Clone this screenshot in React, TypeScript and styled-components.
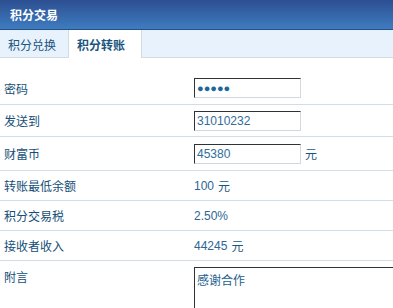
import styled, { createGlobalStyle } from "styled-components";

const GlobalStyle = createGlobalStyle`
  body {
    margin: 0;
    background: #ffffff;
    font-family: "Liberation Sans", "Noto Sans CJK SC", sans-serif;
    font-size: 12px;
  }
`;

const Panel = styled.div`
  width: 393px;
  height: 308px;
  overflow: hidden;
  background: #ffffff;
`;

const Header = styled.div`
  height: 29px;
  border-bottom: 1px solid #24508a;
  background: linear-gradient(#2c4f91, #3f7cc1);
  display: flex;
  align-items: center;
  padding-left: 10px;
  color: #ffffff;
  font-weight: bold;
  font-family: "Noto Sans CJK SC", sans-serif;
  font-size: 12px;
`;

const TabBar = styled.div`
  height: 27px;
  background: #e8f2fc;
  border-bottom: 1px solid #d2dbe2;
  display: flex;
  align-items: stretch;
`;

const Tab = styled.div<{ $active?: boolean }>`
  box-sizing: border-box;
  display: flex;
  align-items: center;
  width: ${(p) => (p.$active ? "74px" : "68px")};
  padding-left: ${(p) => (p.$active ? "8px" : "8px")};
  padding-top: 1px;
  font-family: "Noto Sans CJK SC", sans-serif;
  font-size: 12px;
  color: #1a5580;
  font-weight: ${(p) => (p.$active ? "bold" : "normal")};
  background: ${(p) => (p.$active ? "#ffffff" : "transparent")};
  border-left: ${(p) => (p.$active ? "1px solid #d2dbe2" : "none")};
  border-right: ${(p) => (p.$active ? "1px solid #d2dbe2" : "none")};
  margin-bottom: ${(p) => (p.$active ? "-1px" : "0")};
`;

const Form = styled.div`
  padding: 14px 0 0 4px;
  display: flex;
  flex-direction: column;
`;

const Row = styled.div<{ $h: number; $top?: boolean; $last?: boolean }>`
  display: grid;
  grid-template-columns: 190px 1fr;
  height: ${(p) => p.$h}px;
  align-items: ${(p) => (p.$top ? "start" : "center")};
  border-bottom: ${(p) => (p.$last ? "none" : "1px solid #d3dde6")};
  box-sizing: border-box;
  margin-left: -4px;
  padding-left: 4px;
`;

const Label = styled.div<{ $pad?: number }>`
  font-family: "Noto Sans CJK SC", sans-serif;
  font-size: 12px;
  color: #154f78;
  padding-top: ${(p) => p.$pad ?? 0}px;
`;

const Value = styled.div`
  display: flex;
  align-items: center;
  gap: 4px;
  font-family: "Liberation Sans", "Noto Sans CJK SC", sans-serif;
  font-size: 12px;
  color: #2d6593;
`;

const Input = styled.div`
  width: 107px;
  height: 20px;
  box-sizing: border-box;
  border-top: 1px solid #2f3236;
  border-left: 1px solid #2f3236;
  border-right: 1px solid #d5d8db;
  border-bottom: 1px solid #d5d8db;
  display: flex;
  align-items: center;
  padding-left: 2px;
  font-family: "Liberation Sans", sans-serif;
  font-size: 12px;
  color: #2f6d99;
`;

const Dots = styled.span`
  color: #1d679b;
  font-size: 11px;
`;

const Unit = styled.span`
  font-family: "Noto Sans CJK SC", sans-serif;
  color: #1a5580;
`;

const TextArea = styled.div`
  margin-top: 6px;
  width: 220px;
  height: 60px;
  box-sizing: border-box;
  border-top: 1px solid #2f3236;
  border-left: 1px solid #2f3236;
  padding: 3px 0 0 2px;
  font-family: "Noto Sans CJK SC", sans-serif;
  font-size: 12px;
  color: #1d5f8e;
`;

const App = () => {
  return (
    <Panel>
      <GlobalStyle />
      <Header>积分交易</Header>
      <TabBar>
        <Tab>积分兑换</Tab>
        <Tab $active>积分转账</Tab>
      </TabBar>
      <Form>
        <Row $h={33}>
          <Label>密码</Label>
          <Value>
            <Input>
              <Dots>●●●●●</Dots>
            </Input>
          </Value>
        </Row>
        <Row $h={32}>
          <Label>发送到</Label>
          <Value>
            <Input>31010232</Input>
          </Value>
        </Row>
        <Row $h={34}>
          <Label>财富币</Label>
          <Value>
            <Input>45380</Input>
            <Unit>元</Unit>
          </Value>
        </Row>
        <Row $h={30}>
          <Label>转账最低余额</Label>
          <Value>
            100 <Unit>元</Unit>
          </Value>
        </Row>
        <Row $h={30}>
          <Label>积分交易税</Label>
          <Value>2.50%</Value>
        </Row>
        <Row $h={30}>
          <Label>接收者收入</Label>
          <Value>
            44245 <Unit>元</Unit>
          </Value>
        </Row>
        <Row $h={60} $top $last>
          <Label $pad={7}>附言</Label>
          <TextArea>感谢合作</TextArea>
        </Row>
      </Form>
    </Panel>
  );
};

export default App;
